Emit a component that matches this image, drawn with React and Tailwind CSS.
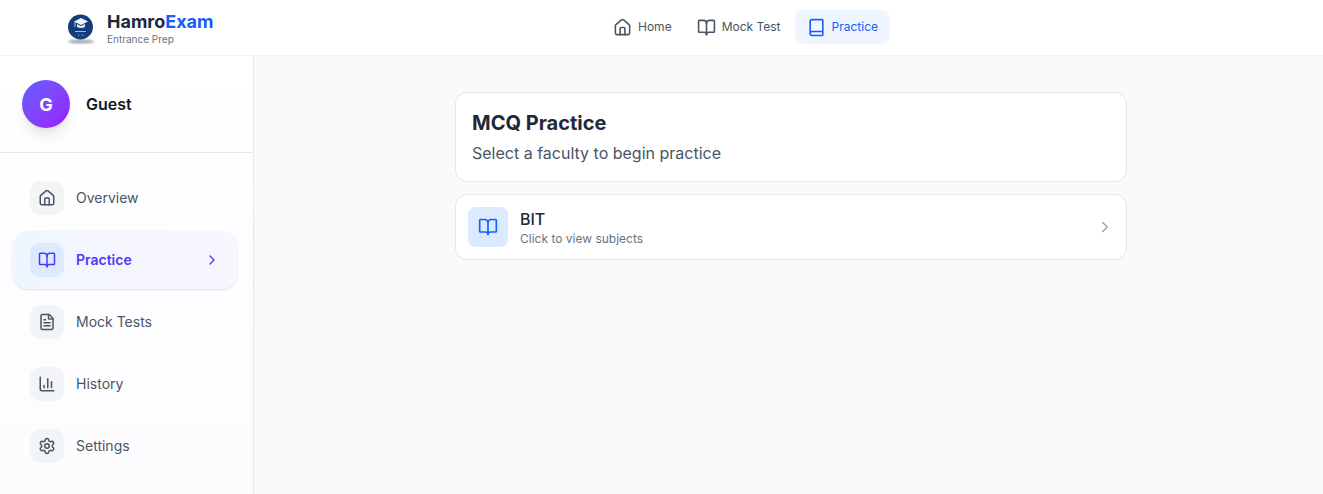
import { House, BookOpen, Book, FileText, ChartColumn, Settings, ChevronRight } from "lucide-react";

const sideItems = [
  { label: "Overview", icon: House },
  { label: "Practice", icon: BookOpen, active: true },
  { label: "Mock Tests", icon: FileText },
  { label: "History", icon: ChartColumn },
  { label: "Settings", icon: Settings },
];

function Logo() {
  return (
    <svg width="32" height="34" viewBox="0 0 32 34" className="shrink-0">
      <defs>
        <filter id="logoShadow" x="-20%" y="-100%" width="140%" height="300%">
          <feGaussianBlur stdDeviation="1.2" />
        </filter>
      </defs>
      <ellipse cx="16" cy="30.5" rx="13" ry="2" fill="#6b7280" opacity="0.6" filter="url(#logoShadow)" />
      <circle cx="15.5" cy="16" r="12.5" fill="#123f7c" />
      <path d="M9 10.5 16 7 23 10.5 16 14z" fill="#f3f6fb" />
      <path d="M12 13v3c2.4 1.3 5.6 1.3 8 0v-3l-4 2z" fill="#dbe6f5" />
      <path d="M10 11v5" stroke="#f3f6fb" strokeWidth="0.8" />
      <rect x="10" y="20" width="11" height="1" fill="#9db7da" />
      <circle cx="13.5" cy="24" r="0.6" fill="#dbe6f5" />
      <circle cx="17.5" cy="24" r="0.6" fill="#dbe6f5" />
    </svg>
  );
}

function NavLink({ icon: Icon, label, active }) {
  return (
    <a
      className={
        active
          ? "flex h-[34px] items-center gap-[6px] rounded-lg bg-blue-50 pl-3 pr-3 text-[12px] text-blue-600"
          : "flex h-[34px] items-center gap-[6px] rounded-lg pl-[11px] pr-3 text-[12px] text-gray-600"
      }
    >
      <Icon size={19} />
      {label}
    </a>
  );
}

function SideItem({ icon: Icon, label, active }) {
  return (
    <a
      className={
        active
          ? "flex h-[58px] items-center gap-3 rounded-2xl bg-gradient-to-r from-blue-50 to-purple-50 px-[17px] shadow-sm"
          : "flex h-[58px] items-center gap-3 rounded-2xl px-[17px]"
      }
    >
      <span
        className={
          active
            ? "flex h-[34px] w-[34px] items-center justify-center rounded-[10px] bg-blue-100 text-indigo-600"
            : "flex h-[34px] w-[34px] items-center justify-center rounded-[10px] bg-gray-100 text-gray-600"
        }
      >
        <Icon size={18} />
      </span>
      <span className={active ? "pb-[1px] text-sm font-semibold text-indigo-600" : "pb-[1px] text-sm text-gray-600"}>
        {label}
      </span>
      {active && <ChevronRight size={16} className="ml-auto text-indigo-600" />}
    </a>
  );
}

export default function App() {
  return (
    <div className="flex h-[494px] flex-col overflow-hidden bg-gray-50 font-['Inter',sans-serif]">
      <header className="flex h-[56px] shrink-0 items-start border-b border-gray-100 bg-white pl-[65px] pt-[10px]">
        <div className="flex w-[148px] items-center gap-[10px]">
          <Logo />
          <div className="flex flex-col">
            <span className="whitespace-nowrap text-[18px] font-bold leading-[24px] text-gray-800">
              Hamro<span className="text-blue-600">Exam</span>
            </span>
            <span className="whitespace-nowrap text-[10px] leading-[11px] text-gray-500">Entrance Prep</span>
          </div>
        </div>
        <nav className="ml-[389px] flex items-center gap-[2px]">
          <NavLink icon={House} label="Home" />
          <NavLink icon={BookOpen} label="Mock Test" />
          <NavLink icon={Book} label="Practice" active />
        </nav>
      </header>

      <div className="flex flex-1">
        <aside className="w-[254px] shrink-0 border-r border-gray-200 bg-gradient-to-b from-white to-[#fcfcff]">
          <div className="flex h-[97px] items-center gap-4 border-b border-gray-200 px-[22px]">
            <div className="flex h-12 w-12 items-center justify-center rounded-full bg-gradient-to-br from-indigo-500 to-purple-600 text-[18px] font-bold text-white shadow-lg">
              G
            </div>
            <span className="text-[16px] font-semibold text-gray-900">Guest</span>
          </div>
          <nav className="flex flex-col gap-1 pl-[13px] pr-[16px] pt-[16px]">
            {sideItems.map((item) => (
              <SideItem key={item.label} {...item} />
            ))}
          </nav>
        </aside>

        <main className="flex flex-1 justify-center pl-[5px] pt-[36px]">
          <div className="flex w-[672px] flex-col gap-3">
            <section className="h-[90px] rounded-xl border border-gray-200 bg-white px-4 pt-[15px]">
              <h1 className="text-[20px] font-bold leading-[30px] text-gray-800">MCQ Practice</h1>
              <p className="mt-[3px] text-[16px] leading-[24px] text-gray-600">Select a faculty to begin practice</p>
            </section>
            <section className="flex h-[66px] items-center rounded-xl border border-gray-200 bg-white pl-3 pr-3">
              <span className="flex h-10 w-10 items-center justify-center rounded-lg bg-blue-100 text-blue-600">
                <BookOpen size={20} />
              </span>
              <div className="ml-3 flex flex-col">
                <span className="text-[16px] font-medium leading-[22px] text-gray-800">BIT</span>
                <span className="mt-[1px] text-[12px] leading-[16px] text-gray-500">Click to view subjects</span>
              </div>
              <ChevronRight size={18} className="ml-auto text-gray-400" />
            </section>
          </div>
        </main>
      </div>
    </div>
  );
}
